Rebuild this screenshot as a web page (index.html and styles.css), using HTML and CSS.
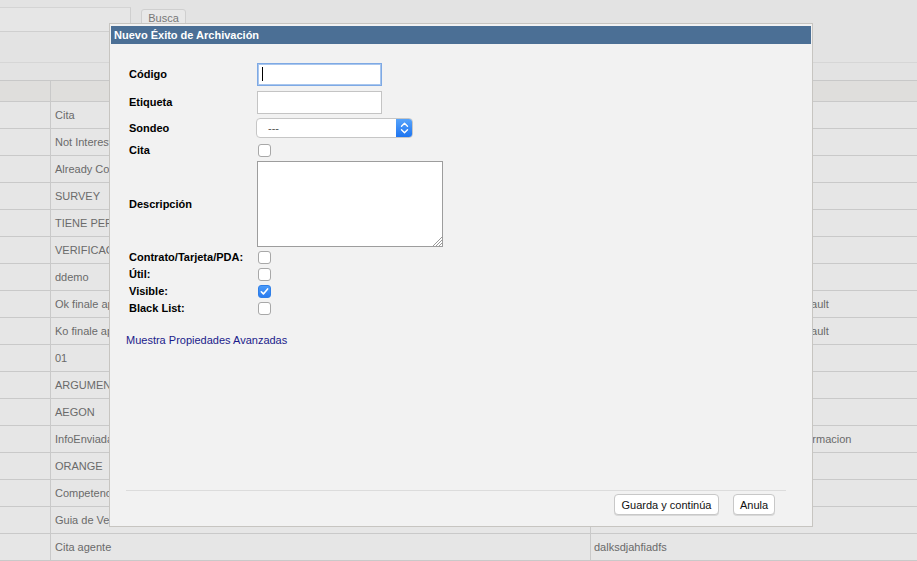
FILE: index.html
```html
<!DOCTYPE html>
<html lang="es">
<head>
<meta charset="utf-8">
<title>Nuevo Éxito de Archivación</title>
<link rel="stylesheet" href="styles.css">
</head>
<body>
<div class="page">
  <div class="topbar">
    <div class="search"></div>
    <div class="busca">Busca</div>
  </div>
  <div class="toolbar"></div>
  <div class="subrow"></div>
  <div class="grid">
    <div class="row head"><div class="c c1"></div><div class="c c2"></div><div class="c c3"></div><div class="c c4"></div></div>
    <div class="row"><div class="c c1"></div><div class="c c2">Cita</div><div class="c c3"></div><div class="c c4"></div></div>
    <div class="row"><div class="c c1"></div><div class="c c2">Not Interested</div><div class="c c3"></div><div class="c c4"></div></div>
    <div class="row"><div class="c c1"></div><div class="c c2">Already Contacted</div><div class="c c3"></div><div class="c c4"></div></div>
    <div class="row"><div class="c c1"></div><div class="c c2">SURVEY</div><div class="c c3"></div><div class="c c4"></div></div>
    <div class="row"><div class="c c1"></div><div class="c c2">TIENE PERMANENCIA</div><div class="c c3"></div><div class="c c4"></div></div>
    <div class="row"><div class="c c1"></div><div class="c c2">VERIFICACION</div><div class="c c3"></div><div class="c c4"></div></div>
    <div class="row"><div class="c c1"></div><div class="c c2">ddemo</div><div class="c c3"></div><div class="c c4"></div></div>
    <div class="row"><div class="c c1"></div><div class="c c2">Ok finale appuntamento</div><div class="c c3"></div><div class="c c4">Default</div></div>
    <div class="row"><div class="c c1"></div><div class="c c2">Ko finale appuntamento</div><div class="c c3"></div><div class="c c4">Default</div></div>
    <div class="row"><div class="c c1"></div><div class="c c2">01</div><div class="c c3"></div><div class="c c4"></div></div>
    <div class="row"><div class="c c1"></div><div class="c c2">ARGUMENTARIO</div><div class="c c3"></div><div class="c c4"></div></div>
    <div class="row"><div class="c c1"></div><div class="c c2">AEGON</div><div class="c c3"></div><div class="c c4"></div></div>
    <div class="row"><div class="c c1"></div><div class="c c2">InfoEnviada</div><div class="c c3"></div><div class="c c4">Informacion</div></div>
    <div class="row"><div class="c c1"></div><div class="c c2">ORANGE</div><div class="c c3"></div><div class="c c4"></div></div>
    <div class="row"><div class="c c1"></div><div class="c c2">Competencia</div><div class="c c3"></div><div class="c c4"></div></div>
    <div class="row"><div class="c c1"></div><div class="c c2">Guia de Venta</div><div class="c c3"></div><div class="c c4"></div></div>
    <div class="row"><div class="c c1"></div><div class="c c2">Cita agente</div><div class="c c3">dalksdjahfiadfs</div><div class="c c4"></div></div>
  </div>
</div>

<div class="modal">
  <div class="title">Nuevo Éxito de Archivación</div>
  <div class="body">
    <div class="form">
      <div class="frow r1"><div class="lbl">Código</div><div class="ctl"><div class="txt focus"><span class="caret"></span></div></div></div>
      <div class="frow r2"><div class="lbl">Etiqueta</div><div class="ctl"><div class="txt"></div></div></div>
      <div class="frow r3"><div class="lbl">Sondeo</div><div class="ctl"><div class="select"><span class="sel-val">---</span><span class="sel-btn"><svg width="17" height="20" viewBox="0 0 17 20"><path d="M5.5 8.2 L8.5 5.2 L11.5 8.2 M5.5 11.8 L8.5 14.8 L11.5 11.8" fill="none" stroke="#fff" stroke-width="1.4" stroke-linecap="round" stroke-linejoin="round"/></svg></span></div></div></div>
      <div class="frow r4"><div class="lbl">Cita</div><div class="ctl"><span class="cb"></span></div></div>
      <div class="frow r5"><div class="lbl">Descripción</div><div class="ctl top"><div class="area"><svg class="grip" width="10" height="10" viewBox="0 0 10 10"><path d="M1 10 L10 1 M4 10 L10 4 M7 10 L10 7" stroke="#9a9a9a" stroke-width="1"/></svg></div></div></div>
      <div class="frow r6 r6a"><div class="lbl">Contrato/Tarjeta/PDA:</div><div class="ctl"><span class="cb"></span></div></div>
      <div class="frow r6"><div class="lbl">Útil:</div><div class="ctl"><span class="cb"></span></div></div>
      <div class="frow r6"><div class="lbl">Visible:</div><div class="ctl"><span class="cb on"><svg width="13" height="13" viewBox="0 0 13 13"><path d="M3.3 6.8 L5.4 8.9 L9.6 3.9" fill="none" stroke="#fff" stroke-width="1.6" stroke-linecap="round" stroke-linejoin="round"/></svg></span></div></div>
      <div class="frow r6"><div class="lbl">Black List:</div><div class="ctl"><span class="cb"></span></div></div>
    </div>
    <a class="adv" href="#">Muestra Propiedades Avanzadas</a>
  </div>
  <div class="footer">
    <button class="btn b1">Guarda y continúa</button>
    <button class="btn b2">Anula</button>
  </div>
</div>
</body>
</html>
```

FILE: styles.css
```css
* { box-sizing: border-box; }
html, body {
  margin: 0;
  padding: 0;
  width: 917px;
  height: 561px;
  overflow: hidden;
  background: #e3e3e3;
  font-family: "Liberation Sans", Arial, sans-serif;
  font-size: 11px;
  color: #666;
}

.page { width: 917px; }

/* background page */
.topbar {
  height: 31px;
  display: flex;
  align-items: flex-start;
}
.search {
  width: 131px;
  height: 25px;
  margin-top: 7px;
  border-right: 1px solid #cfcfcf;
  border-bottom: 1px solid #cfcfcf;
  border-top: 1px solid #d4d4d4;
  background: #e6e6e6;
}
.busca {
  margin-left: 10px;
  margin-top: 9px;
  width: 45px;
  height: 22px;
  border: 1px solid #cfcfcf;
  border-radius: 3px;
  background: #e8e8e8;
  color: #777;
  text-align: center;
  line-height: 17px;
  font-size: 11px;
}
.toolbar {
  height: 32px;
  border-bottom: 1px solid #d6d6d6;
}
.subrow {
  height: 18px;
  border-bottom: 1px solid #c8c8c8;
}
.grid { width: 917px; }
.row {
  display: grid;
  grid-template-columns: 51px 540px 199px 1fr;
  height: 27px;
  border-bottom: 1px solid #c9c9c9;
  background: #e6e6e6;
}
.row.head {
  height: 21px;
  background: #dfdedc;
}
.c {
  padding-left: 4px;
  line-height: 26px;
  white-space: nowrap;
  overflow: hidden;
  color: #6a6a6a;
}
.c1 { border-right: 1px solid #c9c9c9; }
.c2 { border-right: 1px solid #c9c9c9; }
.c3 { padding-left: 3px; }

/* modal */
.modal {
  position: absolute;
  left: 109px;
  top: 23px;
  width: 704px;
  height: 504px;
  border: 1px solid #c7c5c1;
  background: #f2f2f2;
  padding: 2px 1px 0 1px;
  display: flex;
  flex-direction: column;
}
.title {
  height: 18px;
  background: #4b6f95;
  color: #fff;
  font-weight: bold;
  font-size: 11px;
  line-height: 18px;
  padding-left: 3px;
}
.body {
  flex: 1;
  padding: 17px 0 0 15px;
}
.form {
  margin-left: 3px;
  display: flex;
  flex-direction: column;
}
.frow {
  display: flex;
  align-items: center;
}
.r1 { height: 26px; }
.r2 { height: 30px; }
.r3 { height: 22px; }
.r4 { height: 22px; }
.r5 { height: 87px; }
.r6 { height: 17px; }
.r6a { margin-top: 1px; }
.lbl {
  width: 128px;
  font-weight: bold;
  font-size: 11px;
  line-height: 13px;
  color: #000;
  white-space: nowrap;
}
.ctl { display: flex; align-items: center; }
.ctl.top { align-self: flex-start; }

.txt {
  position: relative;
  width: 125px;
  height: 23px;
  background: #fff;
  border: 1px solid #c4c4c4;
}
.txt.focus {
  border: 1px solid #7ea9e4;
  box-shadow: inset 0 0 0 1px #a8c6ee;
}
.caret {
  position: absolute;
  left: 4px;
  top: 3px;
  width: 1px;
  height: 14px;
  background: #000;
}

.select {
  margin-left: -1px;
  width: 157px;
  height: 20px;
  display: flex;
  background: #fff;
  border: 1px solid #c6c6c6;
  border-radius: 4px;
  overflow: hidden;
}
.sel-val {
  flex: 1;
  padding-left: 11px;
  line-height: 18px;
  color: #555;
  font-size: 11px;
}
.sel-btn {
  width: 17px;
  margin: -1px -1px -1px 0;
  height: 20px;
  background: linear-gradient(#5aa6fb, #1b72f0);
  display: flex;
}

.cb {
  margin-left: 1px;
  width: 13px;
  height: 13px;
  border: 1px solid #a8a8a8;
  border-radius: 3px;
  background: #fff;
  display: inline-flex;
}
.cb.on {
  border-color: #2f7fe8;
  background: linear-gradient(#4b9bf8, #2a7bf0);
}
.cb.on svg { margin: -1px; }

.area {
  position: relative;
  width: 186px;
  height: 86px;
  background: #fff;
  border: 1px solid #9d9d9d;
}
.grip {
  position: absolute;
  right: 0;
  bottom: 0;
}

.adv {
  display: block;
  margin-top: 17px;
  font-size: 11px;
  line-height: 13px;
  color: #1b1b8b;
  text-decoration: none;
}

.footer {
  margin: 0 25px 0 15px;
  border-top: 1px solid #dcdcdc;
  padding: 3px 11px 11px 0;
  display: flex;
  justify-content: flex-end;
  gap: 14px;
}
.btn {
  height: 21px;
  padding: 0;
  background: #fff;
  border: 1px solid #c8c8c8;
  border-radius: 4px;
  font-family: "Liberation Sans", Arial, sans-serif;
  font-size: 11px;
  color: #111;
  box-shadow: 0 1px 0 #d9d9d9;
}
.b1 { width: 105px; }
.b2 { width: 42px; }
```
